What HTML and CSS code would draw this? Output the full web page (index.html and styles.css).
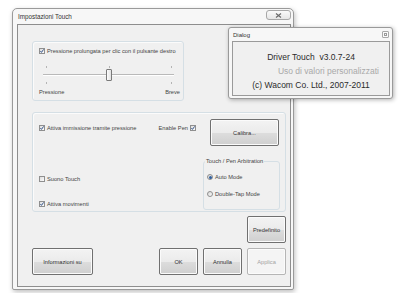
FILE: index.html
```html
<!DOCTYPE html>
<html lang="it">
<head>
    <meta charset="UTF-8">
    <title>Impostazioni Touch</title>
    <link rel="stylesheet" href="styles.css">
</head>
<body>
    <div class="window main-window">
        <div class="titlebar">
            <span class="title">Impostazioni Touch</span>
            <span class="close-btn">
                <svg width="7" height="5" viewBox="0 0 7 5"><path d="M1 0.5 L6 4.5 M6 0.5 L1 4.5" stroke="#6a6a6a" stroke-width="1.2" fill="none"/></svg>
            </span>
        </div>
        <div class="client">
            <div class="group press-group">
                <label class="check">
                    <span class="box"><svg width="4" height="4" viewBox="0 0 4 4"><path d="M0.4 2 L1.5 3.4 L3.6 0.4" stroke="#3c5a8c" stroke-width="1" fill="none"/></svg></span>
                    Pressione prolungata per clic con il pulsante destro
                </label>
                <div class="slider">
                    <div class="ticks"><i></i><i></i><i></i></div>
                    <div class="track"><span class="thumb"></span></div>
                    <div class="ticks"><i></i><i></i></div>
                </div>
                <div class="scale">
                    <span>Pressione</span>
                    <span>Breve</span>
                </div>
            </div>

            <div class="group options-group">
                <div class="col-left">
                    <div class="row-top">
                        <label class="check">
                            <span class="box"><svg width="4" height="4" viewBox="0 0 4 4"><path d="M0.4 2 L1.5 3.4 L3.6 0.4" stroke="#3c5a8c" stroke-width="1" fill="none"/></svg></span>
                            Attiva immissione tramite pressione
                        </label>
                        <label class="check">
                            Enable Pen
                            <span class="box"><svg width="4" height="4" viewBox="0 0 4 4"><path d="M0.4 2 L1.5 3.4 L3.6 0.4" stroke="#3c5a8c" stroke-width="1" fill="none"/></svg></span>
                        </label>
                    </div>
                    <label class="check sound">
                        <span class="box"></span>
                        Suono Touch
                    </label>
                    <label class="check moves">
                        <span class="box"><svg width="4" height="4" viewBox="0 0 4 4"><path d="M0.4 2 L1.5 3.4 L3.6 0.4" stroke="#3c5a8c" stroke-width="1" fill="none"/></svg></span>
                        Attiva movimenti
                    </label>
                </div>
                <div class="col-right">
                    <button class="btn calibra">Calibra...</button>
                    <fieldset class="arbitration">
                        <legend>Touch / Pen Arbitration</legend>
                        <label class="radio first"><span class="dot on"></span>Auto Mode</label>
                        <label class="radio second"><span class="dot"></span>Double-Tap Mode</label>
                    </fieldset>
                </div>
            </div>

            <div class="row-default">
                <button class="btn small">Predefinito</button>
            </div>

            <div class="row-bottom">
                <button class="btn info">Informazioni su</button>
                <div class="actions">
                    <button class="btn small">OK</button>
                    <button class="btn small">Annulla</button>
                    <button class="btn small" disabled>Applica</button>
                </div>
            </div>
        </div>
    </div>

    <div class="window dialog">
        <div class="titlebar">
            <span class="title">Dialog</span>
            <span class="mini-close"><i></i></span>
        </div>
        <div class="panel">
            <p class="line">Driver Touch&nbsp; v3.0.7-24</p>
            <p class="line muted">Uso di valori personalizzati</p>
            <p class="line">(c) Wacom Co. Ltd., 2007-2011</p>
        </div>
    </div>
</body>
</html>
```

FILE: styles.css
```css
body {
    margin: 0;
    width: 400px;
    height: 293px;
    background: #fff;
    font-family: "Liberation Sans", Arial, sans-serif;
    font-size: 5.7px;
    color: #444;
    position: relative;
    overflow: hidden;
}
.window {
    position: absolute;
    box-sizing: border-box;
    display: flex;
    flex-direction: column;
    background: #f7f7f7;
    border: 1px solid #9a9a9a;
    border-radius: 5px 5px 2px 2px;
    box-shadow: 1px 2px 5px rgba(0, 0, 0, 0.25);
}
.main-window {
    left: 12px;
    top: 8px;
    width: 282px;
    height: 282px;
    padding: 0 2px 2px 4px;
}
.titlebar {
    display: flex;
    align-items: center;
    justify-content: space-between;
    height: 15px;
    flex: none;
}
.title {
    font-size: 6.3px;
    color: #333;
    margin-left: 1px;
}
.close-btn {
    box-sizing: border-box;
    width: 25px;
    height: 10px;
    margin-top: -3px;
    border: 1px solid #a8a8a8;
    border-radius: 3px;
    background: linear-gradient(#fafafa, #e6e6e6);
    display: flex;
    align-items: center;
    justify-content: center;
}
.client {
    flex: 1;
    box-sizing: border-box;
    border: 1px solid #8e8e8e;
    background: #f0f0f0;
    padding: 16px 4px 0 14px;
    display: flex;
    flex-direction: column;
}
.group {
    box-sizing: border-box;
    border: 1px solid #d5dfe5;
    border-radius: 3px;
    box-shadow: inset 1px 1px 0 #fbfbfb;
}
.press-group {
    width: 152px;
    height: 60px;
    padding: 0 3px 0 6px;
    display: flex;
    flex-direction: column;
}
.check {
    display: flex;
    align-items: center;
    gap: 2px;
    height: 8px;
    line-height: 8px;
    white-space: nowrap;
}
.press-group .check {
    margin-top: 5px;
}
.box {
    box-sizing: border-box;
    width: 6px;
    height: 6px;
    border: 1px solid #8f8f8f;
    background: linear-gradient(135deg, #dcdcdc, #fdfdfd);
    display: flex;
    align-items: center;
    justify-content: center;
    flex: none;
}
.slider {
    margin: 11px 0 0 4px;
    width: 131px;
}
.ticks {
    display: flex;
    justify-content: space-between;
    height: 2px;
    padding: 0 2px 0 3px;
}
.ticks i {
    width: 1px;
    background: #b4b4b4;
}
.track {
    position: relative;
    height: 12px;
    margin: 1px 0;
}
.track::before {
    content: "";
    display: block;
    position: relative;
    top: 5px;
    height: 1px;
    background: #b9b9b9;
    border-bottom: 1px solid #fff;
}
.thumb {
    position: absolute;
    left: 63px;
    top: 0;
    box-sizing: border-box;
    width: 6px;
    height: 12px;
    border: 1px solid #7a7a7a;
    border-radius: 1px;
    background: linear-gradient(90deg, #fdfdfd, #e2e2e2);
}
.scale {
    display: flex;
    justify-content: space-between;
    margin-top: 4px;
    height: 8px;
    line-height: 8px;
}
.options-group {
    width: 254px;
    height: 100px;
    margin-top: 11px;
    padding-left: 6px;
    display: flex;
}
.col-left {
    width: 157px;
    display: flex;
    flex-direction: column;
}
.row-top {
    display: flex;
    justify-content: space-between;
    margin-top: 11px;
}
.sound {
    margin-top: 43px;
}
.moves {
    margin-top: 17px;
}
.col-right {
    width: 77px;
    margin-left: 7px;
    display: flex;
    flex-direction: column;
}
.btn {
    box-sizing: border-box;
    height: 27px;
    padding: 0;
    border: 1px solid #707070;
    border-radius: 2px;
    background: linear-gradient(#f3f3f3 0%, #ebebeb 50%, #dddddd 51%, #cfcfcf 100%);
    box-shadow: inset 0 0 0 1px #fbfbfb;
    font-family: "Liberation Sans", Arial, sans-serif;
    font-size: 5.7px;
    color: #333;
}
.btn:disabled {
    border-color: #b5b5b5;
    background: #f4f4f4;
    color: #a3a3a3;
}
.calibra {
    width: 69px;
    margin: 6px 0 0 7px;
}
.arbitration {
    box-sizing: border-box;
    margin: 11px 0 0 0;
    padding: 0 0 11px 1px;
    border: 1px solid #d5dfe5;
    border-radius: 3px;
    min-width: 0;
}
.arbitration legend {
    padding: 0 1px;
    height: 8px;
    line-height: 8px;
    font-size: 5.7px;
}
.radio {
    display: flex;
    align-items: center;
    gap: 2px;
    height: 8px;
    line-height: 8px;
    margin-left: 2px;
    white-space: nowrap;
}
.radio.first {
    margin-top: 8px;
}
.radio.second {
    margin-top: 9px;
}
.dot {
    box-sizing: border-box;
    width: 6px;
    height: 6px;
    border: 1px solid #8f8f8f;
    border-radius: 50%;
    background: linear-gradient(135deg, #d6d6d6, #fdfdfd);
    display: flex;
    align-items: center;
    justify-content: center;
}
.dot.on::after {
    content: "";
    width: 3px;
    height: 3px;
    border-radius: 50%;
    background: #2f5f9e;
}
.row-default {
    display: flex;
    justify-content: flex-end;
    margin-top: 4px;
}
.small {
    width: 39px;
}
.row-bottom {
    display: flex;
    justify-content: space-between;
    margin-top: 5px;
}
.info {
    width: 61px;
}
.actions {
    display: flex;
    gap: 5px;
}
.dialog {
    left: 228px;
    top: 27px;
    width: 165px;
    height: 72px;
    padding: 0 2px 2px 3px;
    border-radius: 3px;
    box-shadow: 1px 1px 4px rgba(0, 0, 0, 0.3);
}
.dialog .titlebar {
    height: 13px;
}
.dialog .title {
    margin-left: 1px;
    font-size: 6px;
}
.mini-close {
    box-sizing: border-box;
    width: 7px;
    height: 7px;
    margin-right: 1px;
    border: 1px solid #a9a9a9;
    border-radius: 1px;
    background: #fafafa;
    display: flex;
    align-items: center;
    justify-content: center;
}
.mini-close i {
    width: 3px;
    height: 3px;
    border: 1px solid #9a9a9a;
    box-sizing: border-box;
}
.panel {
    flex: 1;
    box-sizing: border-box;
    border: 1px solid #9a9a9a;
    background: #f0f0f0;
    padding-top: 8px;
}
.line {
    margin: 0;
    height: 14px;
    line-height: 14px;
    font-size: 8.5px;
    text-align: center;
    color: #2b2b2b;
}
.line.muted {
    text-align: right;
    padding-right: 10px;
    color: #a9a9a9;
}
```
